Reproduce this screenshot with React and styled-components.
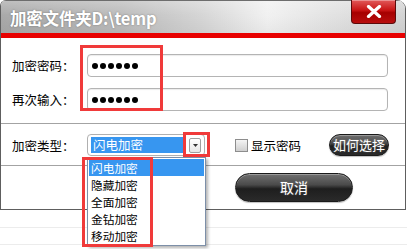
import React from "react";
import styled, { createGlobalStyle } from "styled-components";

const GlobalStyle = createGlobalStyle`
  html, body { margin: 0; padding: 0; background: #ffffff; }
  * { box-sizing: border-box; }
`;

const cjk = `"Noto Sans CJK SC", "Noto Sans", sans-serif`;

const Stage = styled.div`
  position: relative;
  width: 407px;
  height: 249px;
  overflow: hidden;
  background: #ffffff;
  font-family: ${cjk};
  line-height: 1.2;
`;

const Column = styled.div`
  display: flex;
  flex-direction: column;
  height: 100%;
`;

const Window = styled.div`
  width: 406px;
  height: 210px;
  display: flex;
  flex-direction: column;
  border: 1px solid #5e5e5e;
  border-top: none;
  border-radius: 6px 9px 0 0;
  overflow: hidden;
  background: #fff;
`;

const TitleBar = styled.div`
  position: relative;
  height: 33px;
  flex-shrink: 0;
  display: flex;
  align-items: center;
  padding-left: 9px;
  border-top: 1px solid #6d6d6d;
  background:
    linear-gradient(180deg, rgba(255,255,255,0.25) 0%, rgba(255,255,255,0) 45%, rgba(0,0,0,0.04) 100%),
    linear-gradient(90deg, #a9a9a9 0%, #bcbcbc 30%, #d6d6d6 50%, #f1f1f1 66%, #e4e4e4 80%, #d3d3d3 100%);
`;

const Title = styled.span`
  color: #ffffff;
  font-size: 16.5px;
  font-weight: 700;
  letter-spacing: -0.2px;
  margin-top: 4px;
  text-shadow: 0 0 2px rgba(0,0,0,0.35);
`;

const CloseButton = styled.div`
  position: absolute;
  top: -1px;
  right: 9px;
  width: 45px;
  height: 24px;
  display: flex;
  align-items: center;
  justify-content: center;
  border: 1px solid #5b0a0a;
  border-top: none;
  border-radius: 0 0 4px 4px;
  background: linear-gradient(180deg, #e25a5a 0%, #c81414 45%, #a60000 55%, #b80e0e 100%);
  box-shadow: inset 0 1px 0 rgba(255,255,255,0.35);
`;

const RedStripe = styled.div`
  height: 5px;
  flex-shrink: 0;
  background: #e80000;
`;

const Section = styled.div`
  display: flex;
  flex-direction: column;
  gap: ${p => p.$gap || 0}px;
  padding: ${p => p.$pad};
  border-bottom: ${p => (p.$line ? "1px solid #a3a3a3" : "none")};
`;

const Row = styled.div`
  display: flex;
  align-items: center;
  height: ${p => p.$h || 23}px;
`;

const Label = styled.span`
  width: 86px;
  flex-shrink: 0;
  padding-left: 11px;
  font-size: 12.5px;
  color: #000;
  white-space: nowrap;
`;

const Field = styled.div`
  width: 301px;
  height: 23px;
  display: flex;
  align-items: center;
  gap: 2px;
  padding-left: 4px;
  border: 1px solid #b4b4b4;
  border-radius: 4px;
  background: #fff;
  box-shadow: inset 0 1px 1px rgba(0,0,0,0.08);
`;

const Dot = styled.span`
  width: 6px;
  height: 6px;
  border-radius: 50%;
  background: #000;
`;

const Select = styled.div`
  width: 118px;
  height: 22px;
  display: flex;
  align-items: center;
  padding: 0 3px;
  gap: 5px;
  border: 1px solid #b0b0b0;
  border-radius: 4px;
  background: #fff;
`;

const SelectValue = styled.div`
  width: 94px;
  height: 16px;
  display: flex;
  align-items: center;
  padding-left: 2px;
  background: #3796f0;
  color: #fff;
  font-size: 12.5px;
  line-height: 16px;
`;

const ArrowBox = styled.div`
  width: 12px;
  height: 15px;
  display: flex;
  align-items: center;
  justify-content: center;
  border: 1px solid #a0a0a0;
  border-radius: 2px;
  background: linear-gradient(180deg, #ffffff 0%, #e6e6e6 100%);
`;

const CheckWrap = styled.label`
  display: flex;
  align-items: center;
  gap: 3px;
  margin-left: 30px;
  font-size: 12.5px;
  color: #000;
`;

const CheckBox = styled.span`
  width: 13px;
  height: 13px;
  border: 1px solid #8d8d8d;
  background: linear-gradient(180deg, #f4f4f4 0%, #cfcfcf 100%);
`;

const PillButton = styled.div`
  display: flex;
  align-items: center;
  justify-content: center;
  width: ${p => p.$w}px;
  height: ${p => p.$h}px;
  margin-left: ${p => p.$ml}px;
  border: 1px solid #1a1a1a;
  border-radius: ${p => p.$h / 2}px;
  color: #fff;
  font-size: ${p => p.$fs}px;
  text-shadow: 0 0 2px rgba(255,255,255,0.35);
  background: linear-gradient(180deg, #707070 0%, #4a4a4a 40%, #1e1e1e 55%, #2a2a2a 100%);
  box-shadow: inset 0 1px 0 rgba(255,255,255,0.3), 0 1px 1px rgba(0,0,0,0.25);
`;

const Backdrop = styled.div`
  flex: 1;
  display: flex;
  flex-direction: column;
  padding-top: 17px;
  gap: 16px;
`;

const Faint = styled.div`
  height: 1px;
  background: #ececec;
`;

const DropList = styled.div`
  position: absolute;
  left: 87px;
  top: 157px;
  width: 119px;
  padding: 1px;
  border: 1px solid #7d8fa8;
  background: #fff;
  box-shadow: 2px 2px 3px rgba(0,0,0,0.3);
`;

const Option = styled.div`
  height: 17px;
  line-height: 17px;
  padding-left: 2px;
  font-size: 11.7px;
  overflow: hidden;
  color: ${p => (p.$active ? "#fff" : "#000")};
  background: ${p => (p.$active ? "#3796f0" : "transparent")};
`;

const Mark = styled.div`
  position: absolute;
  border: 3px solid #f03a3a;
  pointer-events: none;
`;

const options = ["闪电加密", "隐藏加密", "全面加密", "金钻加密", "移动加密"];
const marks = [
  { left: 80, top: 45, width: 83, height: 66 },
  { left: 183, top: 132, width: 27, height: 25 },
  { left: 82, top: 157, width: 71, height: 90 },
];

export default function App() {
  return (
    <>
      <GlobalStyle />
      <Stage>
        <Column>
          <Window>
            <TitleBar>
              <Title>加密文件夹D:\temp</Title>
              <CloseButton>
                <svg width="16" height="13" viewBox="0 0 16 13">
                  <path d="M2.5 1.5 L13.5 11.5 M13.5 1.5 L2.5 11.5" stroke="#fff" strokeWidth="3.2" strokeLinecap="round" />
                </svg>
              </CloseButton>
            </TitleBar>
            <RedStripe />
            <Section $pad="16px 0 12px 0" $gap={11} $line>
              <Row>
                <Label>加密密码：</Label>
                <Field>{[0, 1, 2, 3, 4, 5].map(i => <Dot key={i} />)}</Field>
              </Row>
              <Row>
                <Label>再次输入：</Label>
                <Field>{[0, 1, 2, 3, 4, 5].map(i => <Dot key={i} />)}</Field>
              </Row>
            </Section>
            <Section $pad="10px 0 9px 0" $line>
              <Row $h={22}>
                <Label>加密类型：</Label>
                <Select>
                  <SelectValue>闪电加密</SelectValue>
                  <ArrowBox>
                    <svg width="5" height="3" viewBox="0 0 5 3"><path d="M0 0 H5 L2.5 3 Z" fill="#333" /></svg>
                  </ArrowBox>
                </Select>
                <CheckWrap>
                  <CheckBox />
                  显示密码
                </CheckWrap>
                <PillButton $w={60} $h={22} $ml={28} $fs={13}>如何选择</PillButton>
              </Row>
            </Section>
            <Section $pad="7px 0 0 0">
              <Row $h={29}>
                <PillButton $w={118} $h={29} $ml={234} $fs={14}>取消</PillButton>
              </Row>
            </Section>
          </Window>
          <Backdrop>
            <Faint />
            <Faint />
          </Backdrop>
        </Column>
        <DropList>
          {options.map((o, i) => (
            <Option key={o} $active={i === 0}>{o}</Option>
          ))}
        </DropList>
        {marks.map((m, i) => (
          <Mark key={i} style={m} />
        ))}
      </Stage>
    </>
  );
}
